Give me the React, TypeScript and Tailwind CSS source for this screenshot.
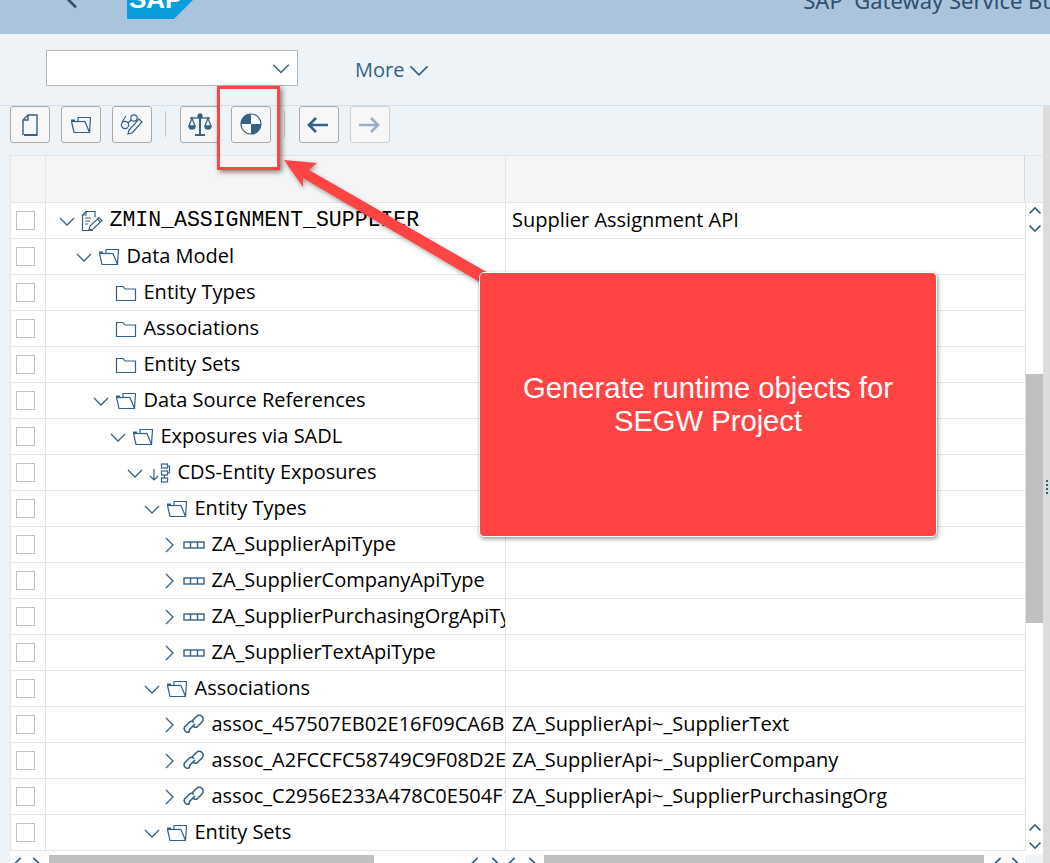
import type { ReactNode } from 'react';

const BLUE = '#346187';

type Row = {
  level: number;
  label: string;
  icon: 'doc' | 'open' | 'closed' | 'cds' | 'type' | 'link';
  arrow?: 'down' | 'right';
  desc?: string;
  mono?: boolean;
};

const rows: Row[] = [
  { level: 0, label: 'ZMIN_ASSIGNMENT_SUPPLIER', icon: 'doc', arrow: 'down', desc: 'Supplier Assignment API', mono: true },
  { level: 1, label: 'Data Model', icon: 'open', arrow: 'down' },
  { level: 2, label: 'Entity Types', icon: 'closed' },
  { level: 2, label: 'Associations', icon: 'closed' },
  { level: 2, label: 'Entity Sets', icon: 'closed' },
  { level: 2, label: 'Data Source References', icon: 'open', arrow: 'down' },
  { level: 3, label: 'Exposures via SADL', icon: 'open', arrow: 'down' },
  { level: 4, label: 'CDS-Entity Exposures', icon: 'cds', arrow: 'down' },
  { level: 5, label: 'Entity Types', icon: 'open', arrow: 'down' },
  { level: 6, label: 'ZA_SupplierApiType', icon: 'type', arrow: 'right' },
  { level: 6, label: 'ZA_SupplierCompanyApiType', icon: 'type', arrow: 'right' },
  { level: 6, label: 'ZA_SupplierPurchasingOrgApiType', icon: 'type', arrow: 'right' },
  { level: 6, label: 'ZA_SupplierTextApiType', icon: 'type', arrow: 'right' },
  { level: 5, label: 'Associations', icon: 'open', arrow: 'down' },
  { level: 6, label: 'assoc_457507EB02E16F09CA6B1D', icon: 'link', arrow: 'right', desc: 'ZA_SupplierApi~_SupplierText' },
  { level: 6, label: 'assoc_A2FCCFC58749C9F08D2E71', icon: 'link', arrow: 'right', desc: 'ZA_SupplierApi~_SupplierCompany' },
  { level: 6, label: 'assoc_C2956E233A478C0E504F12', icon: 'link', arrow: 'right', desc: 'ZA_SupplierApi~_SupplierPurchasingOrg' },
  { level: 5, label: 'Entity Sets', icon: 'open', arrow: 'down' },
];

function Chevron({ dir, size = 18, color = BLUE, weight = 1.3 }: { dir: 'up' | 'down' | 'left' | 'right'; size?: number; color?: string; weight?: number }) {
  const d = {
    up: 'M2 12 L9 5 L16 12',
    down: 'M2 6 L9 13 L16 6',
    left: 'M12 2 L5 9 L12 16',
    right: 'M6 2 L13 9 L6 16',
  }[dir];
  return (
    <svg width={size} height={size} viewBox="0 0 18 18" fill="none" stroke={color} strokeWidth={weight}>
      <path d={d} />
    </svg>
  );
}

function TreeIcon({ name }: { name: Row['icon'] }) {
  if (name === 'open') {
    return (
      <svg width="22" height="20" viewBox="0 0 22 20" fill="none" stroke={BLUE} strokeWidth="1.2">
        <path d="M1.5 6.5 H15" />
        <path d="M1.5 6.5 L4 17.5 H19.5 L20.5 2.5 H8 V6" />
        <path d="M15 6.5 L19.5 17.5" />
        <rect x="1" y="4.5" width="4" height="2" fill={BLUE} stroke="none" />
      </svg>
    );
  }
  if (name === 'closed') {
    return (
      <svg width="22" height="20" viewBox="0 0 22 20" fill="none" stroke={BLUE} strokeWidth="1.2">
        <path d="M1.5 17.5 V3.5 H8 L10 6 H20.5 V17.5 Z" />
      </svg>
    );
  }
  if (name === 'doc') {
    return (
      <svg width="24" height="22" viewBox="0 0 24 22" fill="none" stroke={BLUE} strokeWidth="1.2">
        <path d="M13 20.5 H2.5 V5 L6 1.5 H15 V7" />
        <path d="M2.5 5 H6 V1.5" />
        <path d="M5 8 H11 M5 11 H10 M5 14 H8" />
        <path d="M9 20 L10 16 L19 7.5 L22 10.5 L13 19 Z" />
        <path d="M17.5 9 L20.5 12" />
      </svg>
    );
  }
  if (name === 'cds') {
    return (
      <svg width="22" height="22" viewBox="0 0 22 22" fill="none" stroke={BLUE} strokeWidth="1.2">
        <path d="M5 7 V18 M1 14 L5 18 L9 14" />
        <rect x="12.5" y="2" width="6" height="4" />
        <rect x="12.5" y="9" width="6" height="4" />
        <rect x="12.5" y="16" width="6" height="4" />
        <path d="M18.5 4 H20.5 V11 H18.5 M15.5 13 V16" />
      </svg>
    );
  }
  if (name === 'type') {
    return (
      <svg width="22" height="10" viewBox="0 0 22 10" fill="none" stroke={BLUE} strokeWidth="1.4">
        <rect x="1" y="2" width="20" height="6" />
        <path d="M7.5 2 V8 M14.5 2 V8" />
      </svg>
    );
  }
  return (
    <svg width="23" height="23" viewBox="0 0 23 23" fill="none" stroke={BLUE} strokeWidth="1.6">
      <path d="M10 8 L14.5 3.5 A3.6 3.6 0 0 1 20 9 L15.5 13.5 A3.5 3.5 0 0 1 11 13" />
      <path d="M13 11 L8 16 L7 19 A3.6 3.6 0 0 1 2.5 14 L7.5 9 A3.5 3.5 0 0 1 12 9.5" />
    </svg>
  );
}

function ToolButton({ children, disabled }: { children: ReactNode; disabled?: boolean }) {
  return (
    <button
      className={
        disabled
          ? 'w-[40px] h-[37px] shrink-0 flex items-center justify-center bg-[#f7f7f7] rounded-[3px] border border-[#cfcfcf]'
          : 'w-[40px] h-[37px] shrink-0 flex items-center justify-center bg-[#f7f7f7] rounded-[3px] border border-[#ababab]'
      }
    >
      {children}
    </button>
  );
}

function Separator() {
  return <div className="w-px h-[26px] bg-[#c8c8c8] mt-[5px] shrink-0" />;
}

function ArrowSm({ left, color }: { left?: boolean; color: string }) {
  return (
    <svg className="mr-[3px]" width="24" height="20" viewBox="0 0 24 20" fill="none" stroke={color} strokeWidth="2.7">
      {left ? <path d="M22 10 H3 M10 3 L3 10 L10 17" /> : <path d="M2 10 H21 M14 3 L21 10 L14 17" />}
    </svg>
  );
}

function ScrollPair({ gap }: { gap: string }) {
  return (
    <div className={gap}>
      <Chevron dir="left" size={16} weight={2} />
      <Chevron dir="right" size={16} weight={2} />
    </div>
  );
}

export default function App() {
  return (
    <div
      className="relative w-[1050px] h-[863px] overflow-hidden bg-[#eef3f8]"
      style={{ fontFamily: '"Open Sans", sans-serif' }}
    >
      {/* shell header, cut off at the top */}
      <div className="h-[34px] bg-[#a9c4dc] relative overflow-hidden flex items-end">
        <div className="ml-[60px] mb-[24px]">
          <Chevron dir="left" size={24} color="#2f4f6f" weight={2} />
        </div>
        <div className="ml-[43px] h-[19px] self-start">
          <svg width="66" height="19" viewBox="0 0 66 19">
            <polygon points="0,0 66,0 47,19 0,19" fill="#0a9ddb" />
            <text x="2" y="8" fill="#fff" fontSize="26" fontWeight="700" fontFamily="Liberation Sans, sans-serif">SAP</text>
          </svg>
        </div>
        <div
          className="ml-auto mr-[-6px] mb-[19px] text-[22px] leading-[30px] text-[#2f4f6f] whitespace-nowrap"
          style={{ fontFamily: '"Noto Sans", sans-serif' }}
        >
          SAP&nbsp; Gateway Service Bu
        </div>
      </div>

      {/* selection bar */}
      <div className="h-[72px] border-b border-[#d5e0ec] flex items-start pl-[46px] pt-[16px]">
        <div className="w-[252px] h-[36px] bg-white border border-[#b8b8b8] flex items-center justify-end pr-[6px]">
          <Chevron dir="down" size={20} />
        </div>
        <div className="ml-[57px] mt-[6px] flex items-center gap-[4px] text-[20px] leading-[28px] text-[#346187]">
          More
          <Chevron dir="down" size={22} />
        </div>
      </div>

      <div className="flex">
        <div className="w-[1043px] shrink-0">
          {/* application toolbar */}
          <div className="h-[49px] flex items-start pl-[10px] gap-[11px]">
            <ToolButton>
              <svg width="20" height="24" viewBox="0 0 20 24" fill="none" stroke={BLUE} strokeWidth="1.4">
                <path d="M4 22 H17 V2 H8 L3 7 V22" />
                <path d="M3 7 H8 V2" />
                <path d="M4 22 H17" strokeWidth="2" />
              </svg>
            </ToolButton>
            <ToolButton>
              <TreeIcon name="open" />
            </ToolButton>
            <ToolButton>
              <svg width="24" height="24" viewBox="0 0 24 24" fill="none" stroke={BLUE} strokeWidth="1.2">
                <circle cx="5" cy="12" r="3.6" />
                <circle cx="14" cy="5" r="3.2" />
                <path d="M8 10 L11 7 M2 9 L6 3" />
                <path d="M8 21 L9 17 L19 6 L22 9 L12 20 Z" />
              </svg>
            </ToolButton>
            <div className="ml-[2px] mr-[3px] flex">
              <Separator />
            </div>
            <ToolButton>
              <svg width="26" height="26" viewBox="0 0 26 26" fill="none" stroke={BLUE} strokeWidth="1.3">
                <path d="M13 3 V22 M8 23 H18" strokeWidth="2" />
                <path d="M3 6 H23" />
                <circle cx="13" cy="4" r="2" fill={BLUE} />
                <path d="M5 6 L2 14 H8 Z M21 6 L18 14 H24 Z" />
                <path d="M2 14 A3 3 0 0 0 8 14 M18 14 A3 3 0 0 0 24 14" fill={BLUE} />
              </svg>
            </ToolButton>
            <ToolButton>
              <svg width="24" height="24" viewBox="0 0 24 24" className="mt-[-2px]">
                <circle cx="12" cy="12" r="10" fill="#fff" stroke={BLUE} strokeWidth="1.2" />
                <path d="M12 12 V2 A10 10 0 0 0 2 12 Z" fill={BLUE} />
                <path d="M12 12 V22 A10 10 0 0 0 22 12 Z" fill={BLUE} />
              </svg>
            </ToolButton>
            <div className="ml-[2px] mr-[3px] flex">
              <Separator />
            </div>
            <ToolButton>
              <ArrowSm left color={BLUE} />
            </ToolButton>
            <ToolButton disabled>
              <ArrowSm color="#9ab0c4" />
            </ToolButton>
          </div>

          {/* table */}
          <div className="ml-[10px]">
            <div className="flex h-[48px] border-y border-[#e5e5e5] border-l">
              <div className="w-[35px] bg-[#f5f5f5] border-r border-[#e5e5e5]" />
              <div className="w-[460px] bg-[#f5f5f5] border-r border-[#e5e5e5]" />
              <div className="w-[519px] bg-[#f5f5f5] border-r border-[#d8d8d8]" />
              <div className="flex-1" />
            </div>
            <div className="flex">
              <div className="w-[1015px] bg-white">
                {rows.map((row, i) => (
                  <div key={i} className="flex h-[36px] border-b border-[#e5e5e5] text-[20px] text-black">
                    <div className="w-[36px] shrink-0 flex items-center pl-[5px] border-x border-[#e5e5e5]">
                      <div className="w-[19px] h-[19px] border border-[#cbbfbc] bg-white" />
                    </div>
                    <div
                      className="w-[460px] shrink-0 flex items-center overflow-hidden whitespace-nowrap border-r border-[#e5e5e5]"
                      style={{ paddingLeft: 10.5 + row.level * 17 }}
                    >
                      <div className="w-[20px] shrink-0 flex justify-center">
                        {row.arrow && <Chevron dir={row.arrow} size={18} />}
                      </div>
                      <div className="w-[24px] ml-[3px] shrink-0 flex justify-center">
                        <TreeIcon name={row.icon} />
                      </div>
                      <span
                        className={row.mono ? 'ml-[6px] text-[21.5px]' : 'ml-[6px] pb-[2px]'}
                        style={row.mono ? { fontFamily: '"Liberation Mono", monospace' } : undefined}
                      >
                        {row.label}
                      </span>
                    </div>
                    <div className="flex-1 pl-[6px] pb-[2px] flex items-center whitespace-nowrap overflow-hidden">{row.desc}</div>
                  </div>
                ))}
              </div>
              {/* vertical scrollbar */}
              <div className="w-[18px] bg-white border-l border-[#e0e0e0] flex flex-col">
                <div className="flex flex-col items-center pt-[1px] gap-[3px]">
                  <Chevron dir="up" size={14} weight={2} />
                  <Chevron dir="down" size={14} weight={2} />
                </div>
                <div className="mt-[139px] h-[249px] bg-[#bfbfbf]" />
                <div className="flex flex-col items-center mt-auto mb-[-1px] gap-[3px]">
                  <Chevron dir="up" size={14} weight={2} />
                  <Chevron dir="down" size={14} weight={2} />
                </div>
              </div>
            </div>
            {/* horizontal scrollbars */}
            <div className="flex h-[12px] bg-white items-start overflow-hidden">
              <div className="w-[39px] h-[12px] pt-[5px] shrink-0">
                <ScrollPair gap="flex justify-start gap-[2px]" />
              </div>
              <div className="w-[325px] mt-[4px] shrink-0 h-[8px] bg-[#bfbfbf]" />
              <div className="w-[129px] h-[12px] pt-[5px] shrink-0">
                <ScrollPair gap="flex justify-end gap-[4px]" />
              </div>
              <div className="w-[41px] h-[12px] pt-[5px] pl-[1px] shrink-0">
                <ScrollPair gap="flex justify-start gap-[4px]" />
              </div>
              <div className="w-[440px] mt-[4px] shrink-0 h-[8px] bg-[#bfbfbf]" />
              <div className="w-[41px] h-[12px] pt-[5px] pl-[6px] shrink-0">
                <ScrollPair gap="flex justify-start gap-[1px]" />
              </div>
              <div className="flex-1 h-full bg-[#eef3f8] mt-[4px]" />
            </div>
          </div>
        </div>
        <div className="flex-1 bg-[#dcdcdc] relative">
          <div className="absolute left-[3px] top-[374px] flex flex-col gap-[2px]">
            <div className="w-[2px] h-[2px] bg-[#346187]" />
            <div className="w-[2px] h-[2px] bg-[#346187]" />
            <div className="w-[2px] h-[2px] bg-[#346187]" />
            <div className="w-[2px] h-[2px] bg-[#346187]" />
          </div>
        </div>
      </div>

      {/* annotations drawn over the screen */}
      <div className="absolute left-[217px] top-[86px] w-[63px] h-[84px] border-[3px] border-[#ff4444] shadow-[2px_2px_5px_rgba(0,0,0,0.5)]" />
      <svg className="absolute left-0 top-0 pointer-events-none" width="1050" height="863">
        <polygon
          points="284,160 317,163 309,170 490,274 490,288 303,178 303,187"
          fill="#ff4444"
          style={{ filter: 'drop-shadow(1px 2px 2px rgba(0,0,0,0.35))' }}
        />
      </svg>
      <div
        className="absolute left-[479px] top-[272px] w-[458px] h-[265px] bg-[#ff4444] border border-white rounded-[5px] shadow-[1px_2px_4px_rgba(0,0,0,0.4)] flex items-center justify-center text-center text-white text-[29.2px] leading-[33px]"
        style={{ fontFamily: '"Liberation Sans", Arial, sans-serif' }}
      >
        <div className="w-[420px]">Generate runtime objects for SEGW Project</div>
      </div>
    </div>
  );
}
